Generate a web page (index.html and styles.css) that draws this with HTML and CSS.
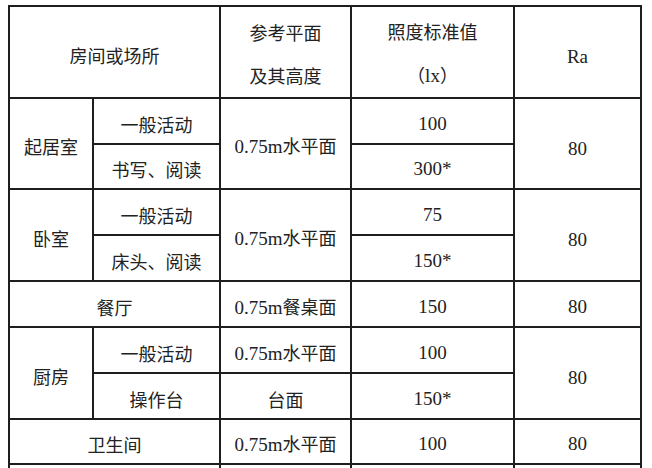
FILE: index.html
```html
<!DOCTYPE html>
<html lang="zh-CN">
<head>
<meta charset="utf-8">
<link rel="stylesheet" href="styles.css">
</head>
<body>
<table class="grid">
  <colgroup>
    <col class="c1"><col class="c2"><col class="c3"><col class="c4"><col class="c5">
  </colgroup>
  <tr class="head">
    <td colspan="2" class="cjk">房间或场所</td>
    <td class="cjk two">参考平面<br>及其高度</td>
    <td class="cjk two">照度标准值<br>（<span class="num">lx</span>）</td>
    <td class="low">Ra</td>
  </tr>
  <tr class="r46">
    <td rowspan="2" class="cjk">起居室</td>
    <td class="cjk">一般活动</td>
    <td rowspan="2">0.75m<span class="cjk">水平面</span></td>
    <td>100</td>
    <td rowspan="2" class="low">80</td>
  </tr>
  <tr class="r45">
    <td class="cjk">书写、阅读</td>
    <td>300*</td>
  </tr>
  <tr class="r46">
    <td rowspan="2" class="cjk">卧室</td>
    <td class="cjk">一般活动</td>
    <td rowspan="2">0.75m<span class="cjk">水平面</span></td>
    <td>75</td>
    <td rowspan="2" class="low">80</td>
  </tr>
  <tr class="r46">
    <td class="cjk">床头、阅读</td>
    <td>150*</td>
  </tr>
  <tr class="r46">
    <td colspan="2" class="cjk">餐厅</td>
    <td>0.75m<span class="cjk">餐桌面</span></td>
    <td>150</td>
    <td>80</td>
  </tr>
  <tr class="r46">
    <td rowspan="2" class="cjk">厨房</td>
    <td class="cjk">一般活动</td>
    <td>0.75m<span class="cjk">水平面</span></td>
    <td>100</td>
    <td rowspan="2" class="low">80</td>
  </tr>
  <tr class="r46">
    <td class="cjk">操作台</td>
    <td class="cjk">台面</td>
    <td>150*</td>
  </tr>
  <tr class="r45">
    <td colspan="2" class="cjk">卫生间</td>
    <td>0.75m<span class="cjk">水平面</span></td>
    <td>100</td>
    <td>80</td>
  </tr>
  <tr class="r46">
    <td colspan="2"></td>
    <td></td>
    <td></td>
    <td></td>
  </tr>
</table>
</body>
</html>
```

FILE: styles.css
```css
html, body {
  margin: 0;
  padding: 0;
  background: #ffffff;
  overflow: hidden;
}

.grid {
  margin: 5px 0 0 8px;
  width: 634px;
  table-layout: fixed;
  border-collapse: separate;
  border-spacing: 0;
  border-top: 2px solid #1e1e1e;
  border-left: 2px solid #1e1e1e;
  font-family: "Liberation Serif", "Noto Sans CJK SC", serif;
  font-size: 19px;
  color: #222222;
}

.c1 { width: 84px; }
.c2 { width: 127px; }
.c3 { width: 131px; }
.c4 { width: 163px; }
.c5 { width: 127px; }

.grid td {
  box-sizing: border-box;
  border-right: 2px solid #1e1e1e;
  border-bottom: 2px solid #1e1e1e;
  padding: 5px 0 0 0;
  text-align: center;
  vertical-align: middle;
  line-height: 24px;
  white-space: nowrap;
}

.grid tr.head { height: 91px; }
.grid tr.r46 { height: 46px; }
.grid tr.r45 { height: 45px; }

.grid td.two {
  line-height: 43px;
  padding-top: 3px;
}

.grid td.low {
  padding-top: 10px;
}

.cjk {
  font-family: "Noto Sans CJK SC", sans-serif;
  font-size: 18px;
}

.num {
  font-family: "Liberation Serif", serif;
  font-size: 19px;
}
```
